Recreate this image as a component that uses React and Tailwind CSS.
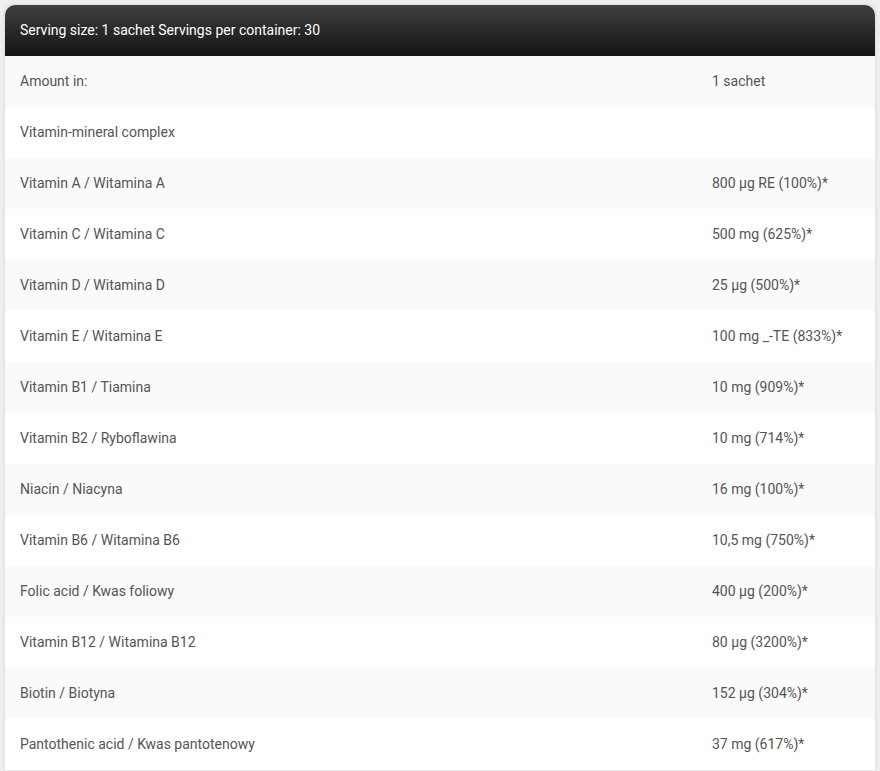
const rows = [
  ['Amount in:', '1 sachet'],
  ['Vitamin-mineral complex', ''],
  ['Vitamin A / Witamina A', '800 µg RE (100%)*'],
  ['Vitamin C / Witamina C', '500 mg (625%)*'],
  ['Vitamin D / Witamina D', '25 µg (500%)*'],
  ['Vitamin E / Witamina E', '100 mg _-TE (833%)*'],
  ['Vitamin B1 / Tiamina', '10 mg (909%)*'],
  ['Vitamin B2 / Ryboflawina', '10 mg (714%)*'],
  ['Niacin / Niacyna', '16 mg (100%)*'],
  ['Vitamin B6 / Witamina B6', '10,5 mg (750%)*'],
  ['Folic acid / Kwas foliowy', '400 µg (200%)*'],
  ['Vitamin B12 / Witamina B12', '80 µg (3200%)*'],
  ['Biotin / Biotyna', '152 µg (304%)*'],
  ['Pantothenic acid / Kwas pantotenowy', '37 mg (617%)*'],
];

export default function App() {
  return (
    <div className="min-h-screen bg-[#efefef] p-[5px] font-['Roboto',sans-serif]">
      <div className="rounded-t-[10px] bg-white shadow-[0_0_4px_rgba(0,0,0,0.12)]">
        {/* header */}
        <div className="flex h-[51px] items-center rounded-t-[10px] bg-gradient-to-b from-[#404040] to-[#141414] px-[15px] text-[14px] text-white">
          Serving size: 1 sachet Servings per container: 30
        </div>

        {rows.map(([name, value], i) => (
          <div
            key={name}
            className={`flex h-[51px] items-center text-[14px] text-[#555] ${i % 2 === 0 ? 'bg-[#fafafa]' : 'bg-white'}`}
          >
            <div className="w-[692px] px-[15px]">{name}</div>
            <div className="flex-1 px-[15px]">{value}</div>
          </div>
        ))}
      </div>
    </div>
  );
}
